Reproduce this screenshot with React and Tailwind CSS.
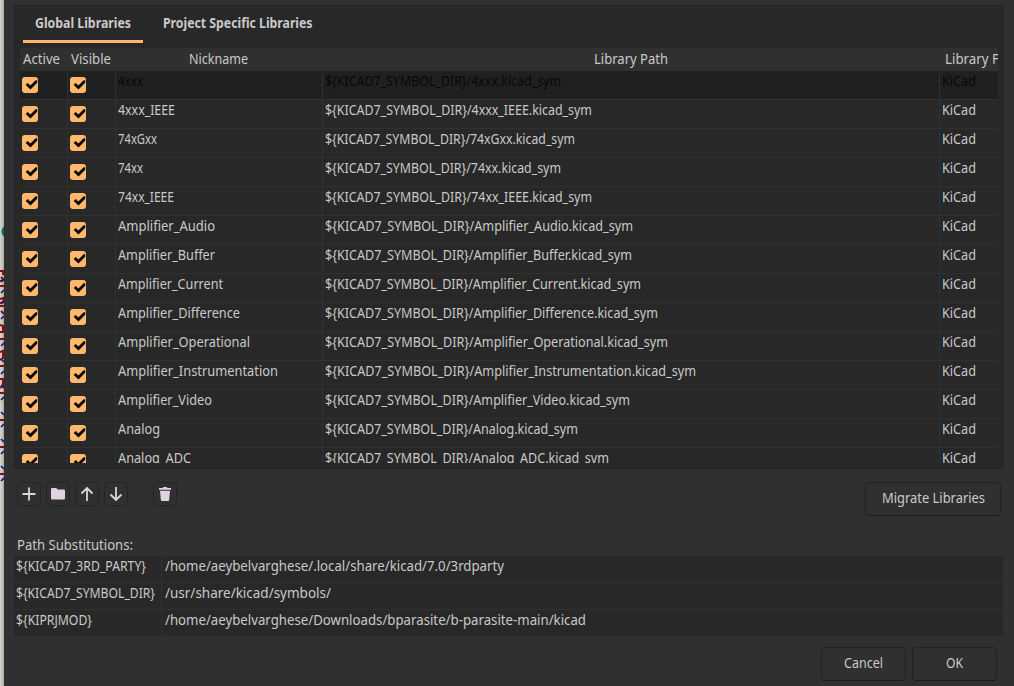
import { useLayoutEffect, useRef, useState } from 'react';

// Condenses a line of text horizontally to a given width.
function Fit({ w, children, className = '' }) {
  const ref = useRef(null);
  const [scale, setScale] = useState(1);
  useLayoutEffect(() => {
    setScale(w / ref.current.getBoundingClientRect().width);
  }, []);
  return (
    <span className="block shrink-0" style={{ width: w }}>
      <span ref={ref} className={`inline-block origin-left whitespace-pre align-top ${className}`} style={{ transform: `scaleX(${scale})` }}>
        {children}
      </span>
    </span>
  );
}

const libraries = [
  ['4xxx', 25, 236],
  ['4xxx_IEEE', 57, 267],
  ['74xGxx', 39, 250],
  ['74xx', 25, 236],
  ['74xx_IEEE', 56, 267],
  ['Amplifier_Audio', 97, 308],
  ['Amplifier_Buffer', 97, 307],
  ['Amplifier_Current', 105, 316],
  ['Amplifier_Difference', 122, 333],
  ['Amplifier_Operational', 132, 343],
  ['Amplifier_Instrumentation', 160, 371],
  ['Amplifier_Video', 94, 305],
  ['Analog', 42, 253],
  ['Analog_ADC', 73, 284],
];

const substitutions = [
  ['${KICAD7_3RD_PARTY}', 130, '/home/aeybelvarghese/.local/share/kicad/7.0/3rdparty', 339],
  ['${KICAD7_SYMBOL_DIR}', 139, '/usr/share/kicad/symbols/', 166],
  ['${KIPRJMOD}', 76, '/home/aeybelvarghese/Downloads/bparasite/b-parasite-main/kicad', 421],
];

function Check() {
  return (
    <div className="mt-1.5 ml-0.5 h-4 w-4 rounded-[3px] bg-[#ffb86c]">
      <svg viewBox="0 0 16 16" className="block h-4 w-4">
        <path d="M3.700 7.900 5.700 6 8.400 8.400 13.700 3.200H15.200V5.700L8.500 12.400Z" fill="#050505" />
      </svg>
    </div>
  );
}

function IconButton({ children, className = '' }) {
  return (
    <button className={`flex h-6 w-6 items-center justify-center rounded-[4px] border border-[#252525] bg-[#303030] ${className}`}>
      <svg viewBox="0 0 16 16" className="h-4 w-4 shrink-0" fill="none" stroke="#ded3df" strokeWidth="1.8">
        {children}
      </svg>
    </button>
  );
}

function Button({ children, w, className }) {
  return (
    <button className={`flex h-[34px] justify-center rounded-[4px] border border-[#232323] border-b-[#1c1c1c] bg-[#303030] pt-[5px] ${className}`}>
      <Fit w={w}>{children}</Fit>
    </button>
  );
}

function Backdrop() {
  return (
    <svg className="h-[686px] w-1 shrink-0 bg-linear-to-r from-[#d2d2cc] via-[#c8c8c3] to-[#a2a29d]" viewBox="0 0 4 686" fill="none">
      <ellipse cx="5" cy="231.500" rx="3.500" ry="5" fill="#086b61" />
      <g stroke="#900808" strokeWidth="2">
        <path d="M0 271h3v4M1 277l3 3-4 1M0 286h4M0 299l3-1 1 4-4 1M0 306h4M1 311l3 3M0 325l3 1v6H0M0 339h4M0 352l3-1v7l-3 2M0 366h4M0 379h3v7l-3 2M0 393h4M0 420h4M0 447h4M0 474h4" />
      </g>
      <g stroke="#15157f" strokeWidth="1.6">
        <path d="m1 282 3-3M1 293l3-3M1 304l3-3M1 319l3-3M1 346l3-3M1 359l3 3M1 374l3-3M1 385l3 3M1 400l3-3M1 412l3 3M1 427l3-3M1 439l3 3M1 454l3-3M1 466l3 3M1 481l3-3" />
      </g>
    </svg>
  );
}

export default function App() {
  return (
    <div className="flex h-[686px] w-[1014px] overflow-hidden bg-[#303030] font-['Noto_Sans',sans-serif] text-[14px] leading-5 text-[#c9c9c9]">
      <Backdrop />
      <main className="flex min-w-0 flex-1 flex-col pt-[5px] pl-2.5">
        <section className="flex h-[464px] w-[990px] flex-col border border-[#242424] bg-[#282828]">
          <nav className="flex h-[37px] shrink-0 border-b border-[#222222] pl-2 font-bold">
            <div className="h-[37px] w-[120px] border-b-[3px] border-[#ffb86c] pt-[7px] pl-3">
              <Fit w={96}>Global Libraries</Fit>
            </div>
            <div className="pt-[7px] pl-5">
              <Fit w={149.500}>Project Specific Libraries</Fit>
            </div>
          </nav>
          <div className="mt-[5px] ml-[5px] h-[415px] w-[978px] overflow-hidden">
            <div className="flex h-[23px] bg-[#303030] pt-px">
              <div className="w-12 shrink-0 pl-[3px]"><Fit w={37}>Active</Fit></div>
              <div className="w-12 shrink-0 pl-[3px]"><Fit w={40}>Visible</Fit></div>
              <div className="flex w-[207px] shrink-0 justify-center pr-0.5"><Fit w={59}>Nickname</Fit></div>
              <div className="flex w-[617px] shrink-0 justify-center pr-0.5"><Fit w={74}>Library Path</Fit></div>
              <div className="w-[58px] shrink-0 overflow-hidden pl-[5px]"><Fit w={92}>Library Format</Fit></div>
            </div>
            {libraries.map(([name, nameWidth, pathWidth], i) => (
              <div key={name} className={`flex h-[29px] ${i === 0 ? 'bg-[#202020] text-[#080808]' : ''}`}>
                <div className="w-12 shrink-0 border-r border-b border-[#313131]"><Check /></div>
                <div className="w-12 shrink-0 border-r border-b border-[#313131]"><Check /></div>
                <div className="w-[207px] shrink-0 border-r border-b border-[#313131] pl-0.5"><Fit w={nameWidth}>{name}</Fit></div>
                <div className="w-[617px] shrink-0 border-r border-b border-[#313131] pl-0.5"><Fit w={pathWidth}>{'${KICAD7_SYMBOL_DIR}/' + name + '.kicad_sym'}</Fit></div>
                <div className="w-[58px] shrink-0 border-b border-[#313131] pl-0.5"><Fit w={34}>KiCad</Fit></div>
              </div>
            ))}
          </div>
        </section>
        <div className="mt-[13px] flex h-[34px] w-[987px] items-start pl-[3px]">
          <div className="flex gap-[5px]">
            <IconButton><path d="M8 1.5v13M1.5 8h13" /></IconButton>
            <IconButton><path d="M1 3.2Q1 2 2.2 2h4l1.5 1.5h6.1q1.2 0 1.2 1.2v7.6q0 1.2-1.2 1.2H2.2Q1 13.5 1 12.3Z" fill="#ded3df" stroke="none" /></IconButton>
            <IconButton><path d="M8 15V2M2.5 7.5 8 2l5.5 5.5" /></IconButton>
            <IconButton><path d="M8 1v13M2.5 8.5 8 14l5.5-5.5" /></IconButton>
          </div>
          <IconButton className="ml-[25px]"><path d="M2 2h3.5l1-1h3l1 1H14v1.8H2ZM3 4.8h10l-.8 9q-.1 1.2-1.2 1.2H5q-1.100 0-1.200-1.200Z" fill="#ded3df" stroke="none" /></IconButton>
          <Button w={103} className="ml-auto w-[136px]">Migrate Libraries</Button>
        </div>
        <div className="mt-[19px] h-[21px] pl-[3px]"><Fit w={116}>Path Substitutions:</Fit></div>
        <div className="w-[989px] bg-[#282828]">
          {substitutions.map(([name, nameWidth, path, pathWidth], i) => (
            <div key={name} className={`flex ${i < 2 ? 'h-[27px] border-b border-[#313131]' : 'h-[26px]'}`}>
              <div className="w-[148px] shrink-0 border-r border-[#313131] pl-0.5"><Fit w={nameWidth}>{name}</Fit></div>
              <div className="pl-[3px]"><Fit w={pathWidth}>{path}</Fit></div>
            </div>
          ))}
        </div>
        <div className="mt-[11px] flex w-[983px] justify-end gap-1.5">
          <Button w={39} className="w-[85px]">Cancel</Button>
          <Button w={17} className="w-[85px]">OK</Button>
        </div>
      </main>
    </div>
  );
}
